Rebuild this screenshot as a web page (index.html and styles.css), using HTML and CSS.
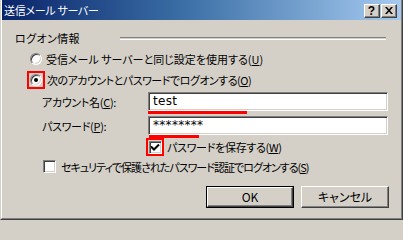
FILE: index.html
```html
<!DOCTYPE html>
<html lang="ja">
<head>
<meta charset="utf-8">
<title>送信メール サーバー</title>
<link rel="stylesheet" href="styles.css">
</head>
<body>
<div class="window">
  <div class="frame">
    <div class="titlebar">
      <span class="title">送信メール サーバー</span>
      <div class="caption-buttons">
        <div class="cap-btn help">?</div>
        <div class="cap-btn close">
          <svg width="8" height="7" viewBox="0 0 8 7"><path d="M0 0h2l2 2.5L6 0h2L5 3.5 8 7H6L4 4.5 2 7H0l3-3.5z" fill="#000"/></svg>
        </div>
      </div>
    </div>
    <div class="content">
      <div class="row group-head">
        <span class="group-label">ログオン情報</span>
        <span class="etched"></span>
      </div>
      <div class="row radio-row">
        <span class="radio"></span>
        <span class="text wide">受信メール サーバーと同じ設定を使用する(<u>U</u>)</span>
      </div>
      <div class="row radio-row sel-row">
        <span class="mark-box"><span class="radio checked"></span></span>
        <span class="text">次のアカウントとパスワードでログオンする(<u>O</u>)</span>
      </div>
      <div class="row field-row first-field">
        <span class="field-label">アカウント名(<u>C</u>):</span>
        <span class="input">test</span>
      </div>
      <div class="redline red-account"></div>
      <div class="row field-row second-field">
        <span class="field-label">パスワード(<u>P</u>):</span>
        <span class="input">********</span>
      </div>
      <div class="redline red-password"></div>
      <div class="row save-row">
        <span class="mark-box"><span class="checkbox"><svg width="9" height="8" viewBox="0 0 9 8"><path d="M0 3.5L3 6.5L8 1.5" fill="none" stroke="#000" stroke-width="2"/></svg></span></span>
        <span class="text">パスワードを保存する(<u>W</u>)</span>
      </div>
      <div class="row spa-row">
        <span class="checkbox"></span>
        <span class="text">セキュリティで保護されたパスワード認証でログオンする(<u>S</u>)</span>
      </div>
      <div class="row button-row">
        <div class="btn default"><span class="btn-inner">OK</span></div>
        <div class="btn"><span class="btn-inner">キャンセル</span></div>
      </div>
    </div>
  </div>
</div>
</body>
</html>
```
FILE: styles.css
```css
html, body {
  margin: 0;
  padding: 0;
  background: #d4d0c8;
  width: 403px;
  height: 220px;
  overflow: hidden;
}

body {
  font-family: "Noto Sans CJK JP", "Noto Sans", sans-serif;
  font-size: 11px;
  line-height: 14px;
  letter-spacing: -0.5px;
  color: #000;
  font-feature-settings: "palt";
}

.window {
  width: 403px;
  height: 220px;
  box-sizing: border-box;
  border-left: 1px solid #d4d0c8;
  border-right: 1px solid #404040;
  border-bottom: 1px solid #404040;
  background: #d4d0c8;
}

.frame {
  height: 100%;
  box-sizing: border-box;
  border-left: 1px solid #ffffff;
  border-right: 1px solid #808080;
  border-bottom: 1px solid #808080;
  display: flex;
  flex-direction: column;
}

.titlebar {
  height: 20px;
  display: flex;
  align-items: flex-start;
  background: linear-gradient(to right, #0a246a 0%, #3a6ea5 45%, #a6caf0 100%);
  padding-left: 2px;
  padding-right: 4px;
}

.title {
  color: #fff;
  line-height: 20px;
  font-size: 11px;
  letter-spacing: -0.3px;
  white-space: nowrap;
}

.caption-buttons {
  margin-left: auto;
  margin-top: 4px;
  display: flex;
  gap: 1px;
  letter-spacing: 0;
}

.cap-btn {
  width: 16px;
  height: 14px;
  box-sizing: border-box;
  background: #d4d0c8;
  border-top: 1px solid #fff;
  border-left: 1px solid #fff;
  border-right: 1px solid #404040;
  border-bottom: 1px solid #404040;
  box-shadow: inset -1px -1px #808080;
  display: flex;
  align-items: center;
  justify-content: center;
}

.help {
  font-family: "Liberation Sans", sans-serif;
  font-weight: bold;
  font-size: 12px;
  line-height: 12px;
  padding-right: 1px;
}

.close svg {
  display: block;
  margin-bottom: 1px;
}

.content {
  display: flex;
  flex-direction: column;
}

.row {
  display: flex;
  align-items: center;
  white-space: nowrap;
}

.group-head {
  margin-top: 11px;
  height: 14px;
}

.group-label {
  margin-left: 13px;
  width: 105px;
  letter-spacing: 0.4px;
}

.etched {
  width: 266px;
  height: 1px;
  border-top: 1px solid #808080;
  border-bottom: 1px solid #ffffff;
}

.radio-row {
  margin-top: 7px;
  height: 14px;
  padding-left: 28px;
}

.radio-row .text {
  margin-left: 4px;
}

.radio-row .text.wide {
  letter-spacing: 0;
}

.sel-row {
  margin-top: 5px;
  height: 18px;
  padding-left: 25px;
}

.sel-row .text {
  margin-left: 2px;
}

.radio {
  width: 12px;
  height: 12px;
  box-sizing: border-box;
  border-radius: 50%;
  background: #fff;
  border-top: 1px solid #808080;
  border-left: 1px solid #808080;
  border-right: 1px solid #fff;
  border-bottom: 1px solid #fff;
  box-shadow: inset 1px 1px #404040, inset -1px -1px #d4d0c8;
  display: flex;
  align-items: center;
  justify-content: center;
}

.radio.checked::after {
  content: "";
  width: 4px;
  height: 4px;
  border-radius: 50%;
  background: #000;
}

.mark-box {
  width: 18px;
  height: 18px;
  box-sizing: border-box;
  border: 2px solid #ff0000;
  display: flex;
  align-items: center;
  justify-content: center;
}

.field-row {
  height: 19px;
  padding-left: 40px;
}

.first-field {
  margin-top: 3px;
}

.second-field {
  margin-top: 2px;
}

.field-label {
  width: 106px;
  letter-spacing: -0.3px;
}

.input {
  width: 240px;
  height: 19px;
  box-sizing: border-box;
  background: #fff;
  border-top: 1px solid #808080;
  border-left: 1px solid #808080;
  border-right: 1px solid #fff;
  border-bottom: 1px solid #fff;
  box-shadow: inset 1px 1px #404040, inset -1px -1px #d4d0c8;
  padding-left: 4px;
  line-height: 17px;
  font-family: "DejaVu Sans", "Liberation Sans", sans-serif;
  font-size: 12px;
  letter-spacing: 0.3px;
}

.redline {
  height: 3px;
  background: #ff0000;
}

.red-account {
  margin-left: 146px;
  width: 99px;
}

.red-password {
  margin-left: 147px;
  width: 50px;
}

.save-row {
  height: 18px;
  padding-left: 144px;
}

.save-row .text {
  margin-left: 3px;
  letter-spacing: -0.3px;
}

.checkbox {
  width: 13px;
  height: 13px;
  box-sizing: border-box;
  background: #fff;
  border-top: 1px solid #808080;
  border-left: 1px solid #808080;
  border-right: 1px solid #fff;
  border-bottom: 1px solid #fff;
  box-shadow: inset 1px 1px #404040, inset -1px -1px #d4d0c8;
  display: flex;
  align-items: center;
  justify-content: center;
}

.checkbox svg {
  display: block;
}

.spa-row {
  margin-top: 3px;
  height: 15px;
  padding-left: 41px;
}

.spa-row .text {
  margin-left: 5px;
  letter-spacing: -1px;
}

.button-row {
  margin-top: 12px;
  padding-left: 204px;
  gap: 7px;
}

.btn {
  width: 88px;
  height: 22px;
  box-sizing: border-box;
  background: #d4d0c8;
  border-top: 1px solid #fff;
  border-left: 1px solid #fff;
  border-right: 1px solid #404040;
  border-bottom: 1px solid #404040;
  box-shadow: inset -1px -1px #808080;
  display: flex;
  align-items: center;
  justify-content: center;
}

.btn.default {
  border: 1px solid #000;
  box-shadow: none;
}

.btn.default .btn-inner {
  width: 100%;
  height: 100%;
  box-sizing: border-box;
  border-top: 1px solid #fff;
  border-left: 1px solid #fff;
  border-right: 1px solid #404040;
  border-bottom: 1px solid #404040;
  box-shadow: inset -1px -1px #808080;
  display: flex;
  align-items: center;
  justify-content: center;
}

.btn-inner {
  line-height: 14px;
  font-size: 12px;
  letter-spacing: 0;
}

u {
  text-decoration: underline;
  text-underline-offset: 1px;
}
```
